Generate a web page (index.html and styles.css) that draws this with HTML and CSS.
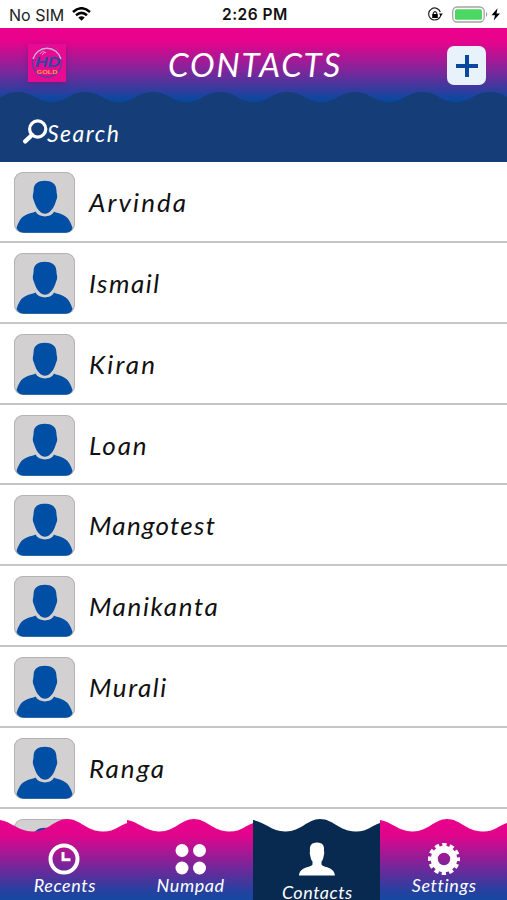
FILE: index.html
```html
<!DOCTYPE html>
<html lang="en">
<head>
<meta charset="utf-8">
<meta name="viewport" content="width=device-width">
<title>Contacts</title>
<link rel="stylesheet" href="styles.css">
</head>
<body>
<svg class="defs" width="0" height="0" aria-hidden="true">
  <symbol id="person" viewBox="0 0 61 61">
    <path d="M30.800 8.800C24 8.800 19.800 11.500 19.600 18C19.500 21 18.800 22.500 18.800 24.500C18.900 27 19.800 28 20.500 30.500C22.500 37 27 41.800 31 41.800C35 41.800 39.500 37 41.500 30.500C42.200 28 43.100 27 43.200 24.500C43.200 22.500 42.500 21 42.400 18C42.200 11.500 37.500 8.800 30.800 8.800Z"/>
    <path d="M21.500 39.500C25 46 37 46 40 39.500C43 41.500 51 41.500 55 48Q57.500 52 58.500 56Q57 60.700 52 60.700H10Q4.500 60.700 2.500 56Q3.500 52 6 48C10 41.500 18 41.500 21.500 39.500Z"/>
  </symbol>
  <symbol id="wave" viewBox="0 0 127 82" preserveAspectRatio="none">
    <path d="M0 2C12 4 18 13 32 13.500C48 14 54 1 67 1C80 1 86 13 102 13.500C115 14 119 7 127 5V82H0Z"/>
  </symbol>
</svg>
<div class="phone">
  <div class="status">
    <span class="carrier">No SIM</span>
    <svg class="wifi" width="19" height="14" viewBox="0 0 19 14"><g fill="none" stroke="#000" stroke-width="2.500"><path d="M1 5Q9.500-2.500 18 5"/><path d="M4 8.300Q9.500 3.500 15 8.300"/></g><path d="M6.300 10.500Q9.500 8 12.700 10.500L9.500 13.700Z"/></svg>
    <span class="time">2:26 PM</span>
    <svg class="power" width="78" height="19" viewBox="0 0 78 19">
      <path d="M12.700 12.200A6 6 0 1 1 13.300 7M13.800 9.500A6 6 0 0 1 11.500 14" fill="none" stroke="#222" stroke-width="1.200"/>
      <path d="M12 8.500H15.800L13.800 11.200Z"/><path d="M5.200 9H10.800V13H5.200Z"/><path d="M6.300 9V8Q8 5.200 9.700 8V9" fill="none" stroke="#111" stroke-width="1.100"/>
      <rect x="25.700" y="2" width="31.500" height="15" rx="4.500" fill="#fff" stroke="#a4a4a4" stroke-width="1.300"/>
      <rect x="28" y="4.300" width="27" height="10.500" rx="1.500" fill="#4cd763"/>
      <path d="M59 7Q61.500 9.500 59 12Z" fill="#999"/>
      <path d="M70.500 3.200L64.500 10.200H68L66.700 15.500L73 8.500H69.500Z"/>
    </svg>
  </div>
  <header class="header">
    <svg class="logo" width="38" height="38" viewBox="0 0 38 38">
      <rect width="38" height="38" fill="#e80a90"/>
      <circle cx="19" cy="18.500" r="14.500" fill="none" stroke="#54419f" stroke-width="1.300"/>
      <path d="M5 15A14.500 14.500 0 0 1 33 15" fill="none" stroke="#e9a4d3" stroke-width="1.500"/>
      <path d="M12 10Q14 6 18 9M14 11L17 8" fill="none" stroke="#df9ed3"/>
      <text x="7" y="22.500" class="logo-hd" textLength="25" lengthAdjust="spacingAndGlyphs">HD</text>
      <text x="8.500" y="29.500" class="logo-gold" textLength="21" lengthAdjust="spacingAndGlyphs">GOLD</text>
    </svg>
    <h1>CONTACTS</h1>
    <button class="add" aria-label="Add contact"><svg width="22" height="22" viewBox="0 0 22 22"><path d="M11 0V22M0 11H22" stroke="#0a48a0" stroke-width="4"/></svg></button>
  </header>
  <div class="search">
    <svg class="crest" width="507" height="14" viewBox="0 0 507 14"><path fill="#153d77" d="M-49.400 1C-34 1-31 11-15.700 11S3 1 18 1S36 11 51.700 11S70 1 85.400 1S103 11 119 11S138 1 152.800 1S171 11 186.500 11S205 1 220.200 1S238 11 254 11S272 1 287.600 1S306 11 321.300 11S340 1 355 1S373 11 388.700 11S407 1 422.400 1S440 11 456 11S474 1 490 1S508 11 523.500 11V14H-49.400Z"/></svg>
    <svg class="glass" width="26" height="25" viewBox="0 0 26 25"><circle cx="15.700" cy="10" r="8.100" fill="none" stroke="#fff" stroke-width="3.200"/><path d="M10 16L3.200 22.300" stroke="#fff" stroke-width="4.400" stroke-linecap="round"/></svg>
    <span>Search</span>
  </div>
  <main class="list">
    <div class="row"><svg class="avatar"><use href="#person"/></svg><span class="n1">Arvinda</span></div>
    <div class="row"><svg class="avatar"><use href="#person"/></svg><span class="n2">Ismail</span></div>
    <div class="row"><svg class="avatar"><use href="#person"/></svg><span class="n3">Kiran</span></div>
    <div class="row"><svg class="avatar"><use href="#person"/></svg><span class="n4">Loan</span></div>
    <div class="row"><svg class="avatar"><use href="#person"/></svg><span class="n5">Mangotest</span></div>
    <div class="row"><svg class="avatar"><use href="#person"/></svg><span class="n6">Manikanta</span></div>
    <div class="row"><svg class="avatar"><use href="#person"/></svg><span class="n7">Murali</span></div>
    <div class="row"><svg class="avatar"><use href="#person"/></svg><span class="n8">Ranga</span></div>
    <div class="row"><svg class="avatar"><use href="#person"/></svg></div>
  </main>
  <nav class="tabs">
    <svg class="waves" width="507" height="82" viewBox="0 0 507 82">
      <defs><linearGradient id="fade" x1="0" y1="0" x2="0" y2="1"><stop offset="0" stop-color="#eb008b"/><stop offset=".2" stop-color="#e1058c"/><stop offset=".6" stop-color="#73279a"/><stop offset=".9" stop-color="#2342a0"/><stop offset="1" stop-color="#1648a0"/></linearGradient></defs>
      <use href="#wave" x="0" width="127.300" height="82" fill="url(#fade)"/>
      <use href="#wave" x="127" width="126.500" height="82" fill="url(#fade)"/>
      <use href="#wave" x="253" width="127" height="82" fill="#082a50"/>
      <use href="#wave" x="380" width="127" height="82" fill="url(#fade)"/>
    </svg>
    <a class="tab recents"><svg width="34" height="34" viewBox="0 0 34 34"><circle cx="17" cy="17" r="13.500" fill="none" stroke="#fff" stroke-width="4"/><path d="M16 10V17.800H23.500" fill="none" stroke="#fff" stroke-width="3"/></svg><span class="t1">Recents</span></a>
    <a class="tab"><svg width="34" height="34" viewBox="0 0 34 34" fill="#fff"><circle cx="9" cy="8.500" r="6.500"/><circle cx="26.500" cy="8.500" r="6.500"/><circle cx="9" cy="26" r="6.500"/><circle cx="26.500" cy="26" r="6.500"/></svg><span class="t2">Numpad</span></a>
    <a class="tab active"><svg width="38" height="34" viewBox="0 0 38 34"><path fill="#fff" d="M19 .5C13 .5 11.500 4 12 9L11.700 11L12.500 15Q13 18 14.500 19.500V22.500C13 26 2 24 1 33.500H37C36 24 25 26 23.500 22.500V19.500Q25 18 25.500 15L26.300 11L26 9C26.500 4 25 .5 19 .5Z"/></svg><span class="t3">Contacts</span></a>
    <a class="tab"><svg width="34" height="34" viewBox="-17 -17 34 34"><circle r="9.700" fill="none" stroke="#fff" stroke-width="7"/><circle r="13.800" fill="none" stroke="#fff" stroke-width="4.500" stroke-dasharray="4.220 3.006" stroke-dashoffset="2.110"/></svg><span class="t4">Settings</span></a>
  </nav>
</div>
</body>
</html>
```
FILE: styles.css
```css
* { box-sizing: border-box; }
body { margin: 0; background: #fff; font-family: Lato, sans-serif; }
.defs { display: block; height: 0; }
.phone { position: relative; width: 507px; height: 900px; overflow: hidden; }
.status { display: flex; height: 28px; padding: 6px 2px 0 9px; font: 16px/18px Inter, sans-serif; color: #222; }
.carrier { width: 63px; letter-spacing: 0; white-space: nowrap; }
.wifi { margin: 1px 0 0; }
.time { width: 70px; margin-left: 131px; font-weight: 600; font-size: 15.5px; letter-spacing: .5px; white-space: nowrap; color: #111; }
.power { margin: -1px 0 0 auto; flex: none; }
.header { display: grid; grid-template-columns: 38px 1fr 39px; height: 75px; padding: 16px 21px 0 28px; align-items: start; background: linear-gradient(#ed008b 0, #e5048c 14px, #82259b 42px, #0a489f 72px); }
.logo { box-shadow: 0 2px 5px #50208088; }
.logo-hd { font: bold italic 14px "Liberation Sans", sans-serif; fill: #294ba3; }
.logo-gold { font: bold 6px "Liberation Sans", sans-serif; fill: #ff9b45; }
h1 { margin: 2px 0 0 102px; font: italic 400 33px/36px Lato, sans-serif; color: #fff; letter-spacing: 1.8px; white-space: nowrap; }
.add { display: flex; width: 39px; height: 39px; margin-top: 2px; padding: 0; border: 0; border-radius: 7px; align-items: center; justify-content: center; background: #e8f2fa; }
.search { position: relative; display: flex; height: 59px; padding: 16px 0 0 22px; background: #153d77; color: #fff; font-size: 23px; line-height: 28px; font-style: italic; letter-spacing: 1.5px; }
.search span { margin-left: -1px; }
.crest { position: absolute; left: 0; top: -12px; }
.list { display: block; }
.row { display: flex; height: 80.85px; padding: 10px 0 0 14px; border-bottom: 2px solid #c5c5c5; gap: 14px; font-size: 26px; line-height: 61px; font-style: italic; color: #111; }
.avatar { width: 61px; height: 61px; border-radius: 9px; background: #d2d0d1; box-shadow: inset 0 0 0 1px #b4b2b3; fill: #004fa4; }
.n1 { letter-spacing: 2.1px; }
.n2 { letter-spacing: 1.5px; }
.n3 { letter-spacing: 2.2px; }
.n4 { letter-spacing: 1.9px; }
.n5 { letter-spacing: 1.3px; }
.n6 { letter-spacing: 1.6px; }
.n7 { letter-spacing: 1.6px; }
.n8 { letter-spacing: 2px; }
.tabs { position: absolute; left: 0; bottom: 0; display: grid; grid-template-columns: repeat(4, 1fr); width: 507px; height: 82px; }
.waves { position: absolute; inset: 0; }
.tab { position: relative; display: flex; flex-direction: column; align-items: center; padding-top: 24px; color: #fff; font-size: 18px; font-style: italic; line-height: 20px; letter-spacing: .6px; }
.tab svg { flex: none; }
.tab span { margin-top: -1px; margin-left: 1px; }
.recents { padding-left: 2px; }
.tab.active { letter-spacing: .5px; }
.active span { margin-top: 6px; }
```
